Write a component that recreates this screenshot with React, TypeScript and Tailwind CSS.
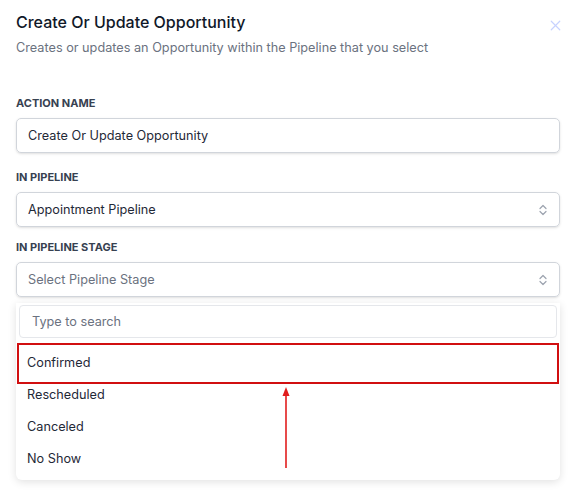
import { X } from "lucide-react";

function Label({ children }: { children: React.ReactNode }) {
  return (
    <div className="text-[11px] font-bold uppercase leading-none text-[#374151]">
      {children}
    </div>
  );
}

function UpDown() {
  return (
    <svg width="10" height="14" viewBox="0 0 10 14" fill="none" className="shrink-0">
      <path d="M2 5.5 L5 2.5 L8 5.5" stroke="#9ca3af" strokeWidth="1.2" strokeLinecap="round" strokeLinejoin="round" />
      <path d="M2 8.5 L5 11.5 L8 8.5" stroke="#9ca3af" strokeWidth="1.2" strokeLinecap="round" strokeLinejoin="round" />
    </svg>
  );
}

const stages = ["Confirmed", "Rescheduled", "Canceled", "No Show"];

export default function App() {
  return (
    <div
      className="relative h-[495px] w-[582px] overflow-hidden bg-white text-[#111827]"
      style={{ fontFamily: "Inter, 'Noto Sans', sans-serif" }}
    >
      <div className="flex items-start justify-between pl-4 pr-[18px] pt-[12px]">
        <div>
          <h1 className="text-[16px] font-medium leading-5 text-[#101828]">
            Create Or Update Opportunity
          </h1>
          <p className="mt-[6px] text-[12.7px] leading-5 text-[#6b7280]">
            Creates or updates an Opportunity within the Pipeline that you select
          </p>
        </div>
        <X className="mt-[5px] h-[17px] w-[17px] text-[#c7d2fe]" strokeWidth={1.7} />
      </div>

      <div className="mt-[40px] px-4 pr-[22px]">
        <Label>Action Name</Label>
        <div className="mt-[9px] flex h-[35px] items-center rounded-[5px] border border-[#d1d5db] px-[11px] text-[12.7px] text-[#1f2937] shadow-sm">
          Create Or Update Opportunity
        </div>

        <div className="mt-[19px]">
          <Label>In Pipeline</Label>
        </div>
        <div className="mt-[9px] flex h-[35px] items-center justify-between rounded-[5px] border border-[#d1d5db] px-[11px] text-[12.7px] text-[#1f2937] shadow-sm">
          <span>Appointment Pipeline</span>
          <UpDown />
        </div>

        <div className="mt-[15px]">
          <Label>In Pipeline Stage</Label>
        </div>
        <div className="mt-[9px] flex h-[35px] items-center justify-between rounded-[5px] border border-[#d1d5db] px-[11px] text-[12.7px] text-[#6b7280] shadow-sm">
          <span>Select Pipeline Stage</span>
          <UpDown />
        </div>
      </div>

      <div className="ml-4 mr-[22px] mt-[6px] rounded-b-[6px] bg-white pb-[5px] shadow-[0_2px_8px_rgba(0,0,0,0.12)]">
        <div className="px-[3px] pt-[2px]">
          <div className="flex h-[33px] items-center rounded-[4px] border border-[#e5e7eb] px-[12px] text-[12.7px] text-[#6b7280]">
            Type to search
          </div>
        </div>
        <div className="mt-[9px]">
          {stages.map((s, i) => (
            <div
              key={s}
              className="relative flex h-[32px] items-center px-[11px] text-[12.7px] text-[#1f2937]"
            >
              {s}
              {i === 0 && (
                <div className="pointer-events-none absolute -bottom-[5px] left-[1px] right-[1px] -top-[4px] border-2 border-[#d10f10]" />
              )}
            </div>
          ))}
        </div>
      </div>

      <svg className="absolute left-[280px] top-[386px]" width="12" height="84" viewBox="0 0 12 84">
        <path d="M6 1 L9.5 10 L2.5 10 Z" fill="#e11d1d" />
        <line x1="6" y1="9" x2="6" y2="82" stroke="#e11d1d" strokeWidth="1.6" />
      </svg>
    </div>
  );
}
